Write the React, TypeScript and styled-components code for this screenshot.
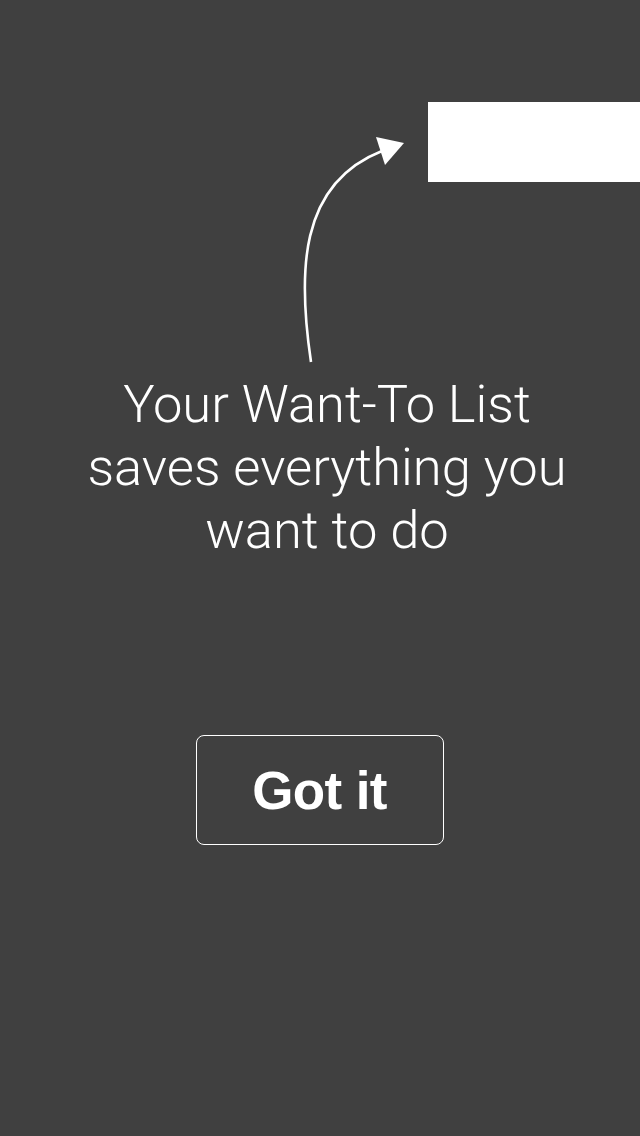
import React from "react";
import styled, { createGlobalStyle } from "styled-components";

const Global = createGlobalStyle`
  html, body { margin: 0; padding: 0; background: #404040; }
  * { box-sizing: border-box; }
`;

const Screen = styled.div`
  width: 640px;
  height: 1136px;
  background: #404040;
  display: flex;
  flex-direction: column;
  overflow: hidden;
  font-family: "Liberation Sans", Arial, sans-serif;
  color: #fff;
`;

const TopRow = styled.div`
  display: flex;
  align-items: flex-start;
  padding-top: 102px;
  padding-left: 298px;
  gap: 22px;
`;

const ArrowArt = styled.svg`
  display: block;
  flex: none;
  width: 108px;
  height: 230px;
  margin-top: 32px;
`;

const Spotlight = styled.div`
  flex: 1;
  height: 80px;
  background: #ffffff;
`;

const Message = styled.p`
  margin: 9px 0 0;
  padding-left: 14px;
  text-align: center;
  font-family: Roboto, "Liberation Sans", sans-serif;
  font-weight: 300;
  font-size: 52.5px;
  line-height: 63px;
  letter-spacing: 0;
`;

const ButtonRow = styled.div`
  display: flex;
  justify-content: center;
  margin-top: 173px;
`;

const GotIt = styled.button`
  width: 248px;
  height: 110px;
  margin-left: -1px;
  background: transparent;
  border: 1px solid #ffffff;
  border-radius: 8px;
  color: #fff;
  font-family: "Liberation Sans", Arial, sans-serif;
  font-weight: 700;
  font-size: 53px;
  letter-spacing: -0.6px;
  cursor: pointer;
`;

export default function App() {
  return (
    <Screen>
      <Global />
      <TopRow>
        <ArrowArt viewBox="0 0 108 230">
          <path
            d="M13 228 C 0 140, 0 50, 84 17"
            fill="none"
            stroke="#fff"
            strokeWidth="2.6"
          />
          <polygon points="78,3 106,9 87,31" fill="#fff" />
        </ArrowArt>
        <Spotlight />
      </TopRow>
      <Message>
        Your Want-To List
        <br />
        saves everything you
        <br />
        want to do
      </Message>
      <ButtonRow>
        <GotIt>Got it</GotIt>
      </ButtonRow>
    </Screen>
  );
}
